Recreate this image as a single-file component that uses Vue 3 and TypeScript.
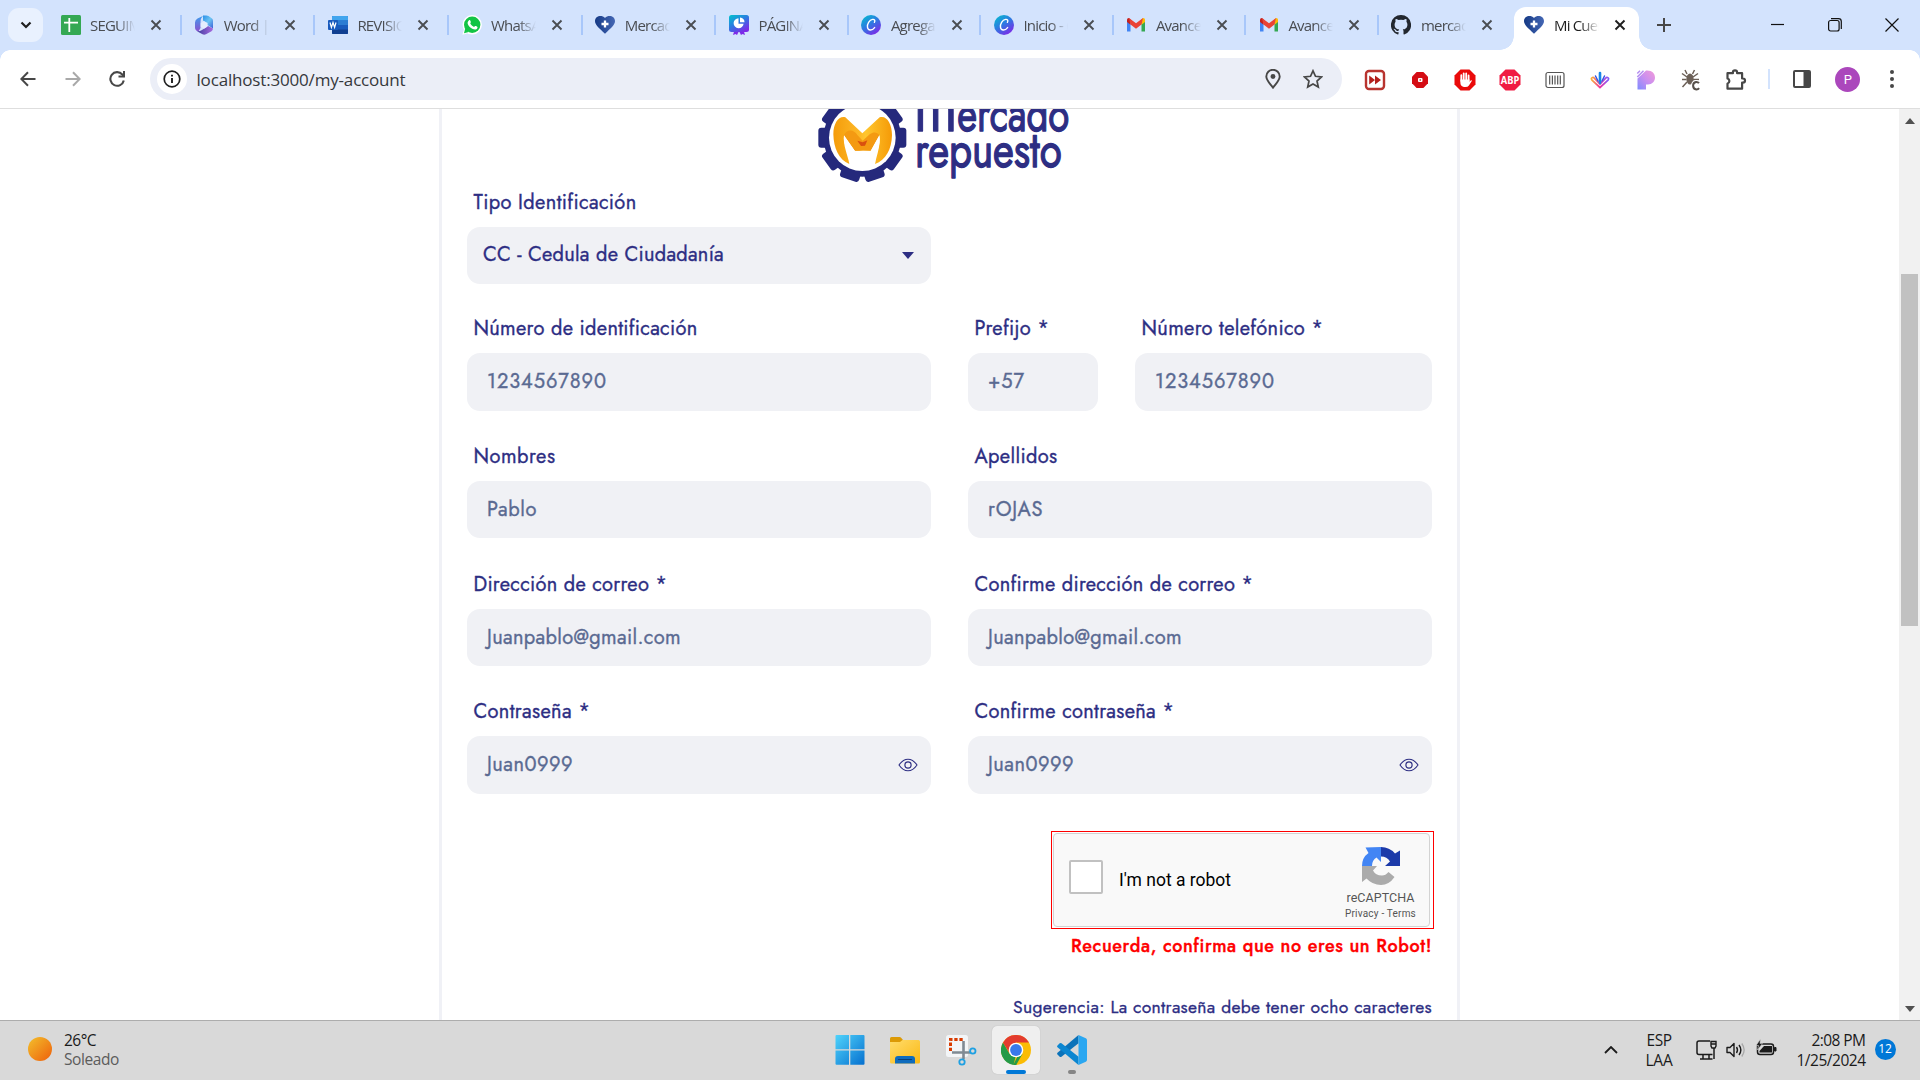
<script setup lang="ts">
interface Tab {
  icon: string
  title: string
  active?: boolean
}

interface Field {
  label: string
  value: string
  labelWidth: number
  valueWidth: number
  kind?: 'select' | 'password'
  slot: string
}

const tabs: Tab[] = [
  { icon: 'sheets', title: 'SEGUIMIENTO' },
  { icon: 'm365', title: 'Word | Microsoft' },
  { icon: 'word', title: 'REVISIONES' },
  { icon: 'whatsapp', title: 'WhatsApp' },
  { icon: 'heart', title: 'Mercado' },
  { icon: 'present', title: 'PÁGINAS' },
  { icon: 'canva', title: 'Agregar' },
  { icon: 'canva', title: 'Inicio - Canva' },
  { icon: 'gmail', title: 'Avances' },
  { icon: 'gmail', title: 'Avances' },
  { icon: 'github', title: 'mercado' },
  { icon: 'heart', title: 'Mi Cuenta', active: true },
]

const extensions = ['forward', 'stop', 'hand', 'abp', 'barcode', 'fan', 'pixel', 'bug', 'puzzle']

const fields: Field[] = [
  { label: 'Tipo Identificación', value: 'CC - Cedula de Ciudadanía', labelWidth: 163, valueWidth: 241, kind: 'select', slot: 'wide' },
  { label: 'Número de identificación', value: '1234567890', labelWidth: 224, valueWidth: 120, slot: 'left' },
  { label: 'Prefijo *', value: '+57', labelWidth: 75, valueWidth: 37, slot: 'prefix' },
  { label: 'Número telefónico *', value: '1234567890', labelWidth: 182, valueWidth: 120, slot: 'phone' },
  { label: 'Nombres', value: 'Pablo', labelWidth: 82, valueWidth: 50, slot: 'left' },
  { label: 'Apellidos', value: 'rOJAS', labelWidth: 83, valueWidth: 55, slot: 'right' },
  { label: 'Dirección de correo *', value: 'Juanpablo@gmail.com', labelWidth: 194, valueWidth: 194, slot: 'left' },
  { label: 'Confirme dirección de correo *', value: 'Juanpablo@gmail.com', labelWidth: 279, valueWidth: 194, slot: 'right' },
  { label: 'Contraseña *', value: 'Juan0999', labelWidth: 117, valueWidth: 86, kind: 'password', slot: 'left' },
  { label: 'Confirme contraseña *', value: 'Juan0999', labelWidth: 200, valueWidth: 86, kind: 'password', slot: 'right' },
]

const gearTeeth = Array.from({ length: 10 }, (_, i) => 18 + i * 36)

// Adjusts tracking so that a line of text spans the given width.
const vFit = {
  mounted(el: HTMLElement, binding: { value: number }) {
    const count = (el.textContent ?? '').length
    const natural = el.getBoundingClientRect().width
    if (count > 0) el.style.letterSpacing = `${(binding.value - natural) / count}px`
  },
}
</script>

<template>
  <div class="screen">
    <svg class="defs" aria-hidden="true">
      <defs>
        <linearGradient id="gCanva" x1="0" y1="0" x2="0.7" y2="1"><stop offset="0" stop-color="#00c4cc" /><stop offset=".5" stop-color="#2a7de1" /><stop offset="1" stop-color="#7d2ae8" /></linearGradient>
        <linearGradient id="gHeart" x1="0" y1="0" x2="1" y2="0"><stop offset="0" stop-color="#163a85" /><stop offset="1" stop-color="#4467b4" /></linearGradient>
        <linearGradient id="gM1" x1="0" y1="0" x2="1" y2="1"><stop offset="0" stop-color="#2c8fe8" /><stop offset=".5" stop-color="#6bc4f2" /><stop offset="1" stop-color="#3a5fd8" /></linearGradient>
        <linearGradient id="gM2" x1="0" y1="0" x2="1" y2="0"><stop offset="0" stop-color="#3e3d9e" /><stop offset="1" stop-color="#a96be0" /></linearGradient>
        <linearGradient id="gM3" x1="0" y1="0" x2="0" y2="1"><stop offset="0" stop-color="#3aa0ee" /><stop offset="1" stop-color="#8a50cf" /></linearGradient>
        <linearGradient id="gFan" x1="0" y1="0" x2="1" y2="0"><stop offset="0" stop-color="#f9b233" /><stop offset=".5" stop-color="#f030a0" /><stop offset="1" stop-color="#7a5cff" /></linearGradient>
        <linearGradient id="gPixel" x1="0" y1="1" x2="1" y2="0"><stop offset="0" stop-color="#7f8cff" /><stop offset=".5" stop-color="#c98ff0" /><stop offset="1" stop-color="#f39ad8" /></linearGradient>
        <linearGradient id="gSun" x1="0" y1="0" x2="1" y2="1"><stop offset="0" stop-color="#f3c02c" /><stop offset="1" stop-color="#ee5f0b" /></linearGradient>
        <linearGradient id="gWin" x1="0" y1="0" x2="1" y2="1"><stop offset="0" stop-color="#4fd3fb" /><stop offset="1" stop-color="#0670cf" /></linearGradient>
        <linearGradient id="gFolder" x1="0" y1="0" x2="1" y2="1"><stop offset="0" stop-color="#ffdc6b" /><stop offset="1" stop-color="#fbb914" /></linearGradient>
        <linearGradient id="gGold" x1="0" y1="0" x2="1" y2="0"><stop offset="0" stop-color="#f59c0a" /><stop offset=".45" stop-color="#fdb827" /><stop offset=".55" stop-color="#ffc62e" /><stop offset="1" stop-color="#f59a07" /></linearGradient>

        <symbol id="sheets" viewBox="0 0 20 20"><rect width="20" height="20" rx="1.5" fill="#34a853" /><path d="M8.3 3v14M3 7.7h14" stroke="#fff" stroke-width="1.8" /></symbol>
        <symbol id="m365" viewBox="0 0 20 20"><path d="M9 .5h3.500q1 0 2 .6L18 3.600q1 .8 1 2.400v7.500L13.500 10V8L9 5.500Z" fill="url(#gM1)" /><path d="M10 .5Q6.500 2 6.500 7v6L4.500 16.500q-3.500-1-3.500-4V7.500Q1 5 3.500 3.500Z" fill="url(#gM3)" /><path d="M3 16.200q2.500.3 5-1.200l6-4L19 13.500q0 1.800-1.500 2.700l-5.500 3q-1.800.9-3.500 0Z" fill="url(#gM2)" /><path d="m10 6.200 3.300 2v3.600L10 13.800l-3.300-2V8.200Z" fill="#e6eefd" /></symbol>
        <symbol id="word" viewBox="0 0 20 20"><rect x="4" y="1" width="16" height="18" rx="1" fill="#185abd" /><path d="M4 2q0-1 1-1h14q1 0 1 1v3.500H4Z" fill="#41a5ee" /><path d="M4 5.500h16V10H4Z" fill="#2b7cd3" /><path d="M4 14.500h16V18q0 1-1 1H5q-1 0-1-1Z" fill="#103f91" /><rect y="5" width="10" height="10" rx="1" fill="#185abd" /><path d="m2 7.500 1.400 5 1.600-5 1.600 5 1.400-5" fill="none" stroke="#fff" stroke-width="1.200" /></symbol>
        <symbol id="whatsapp" viewBox="0 0 20 20"><circle cx="10.200" cy="9.800" r="9.700" fill="#fff" /><path d="M.4 19.700 2 14l4.500 4Z" fill="#fff" /><circle cx="10.200" cy="9.800" r="8.200" fill="#12c445" /><path d="m2 18.200 1.200-4.700 3.500 3.500Z" fill="#12c445" /><path d="M6.800 5.500c.8-.8 1.300-.6 1.700.5.500 1.200.5 1.300-.3 2.200 1 1.900 2.100 2.900 3.900 3.700.9-1.100 1-1.200 1.800-.8 1.700.8 1.800.9 1.500 1.900-.6 1.500-2.500 2-4.600 1.100-2.600-1.100-4.500-3.400-5.100-5.300-.3-1.300.2-2.500 1.100-3.300Z" fill="#fff" /></symbol>
        <symbol id="heart" viewBox="0 0 20 20"><path d="M10 18.700C4 13 0 9.800 0 6 0 1.200 6.500-.8 10 3c3.500-3.800 10-1.800 10 3 0 3.800-4 7-10 12.700Z" fill="url(#gHeart)" /><path d="M10 5.500v7M6.500 9h7" stroke="#fff" stroke-width="2.300" /></symbol>
        <symbol id="present" viewBox="0 0 20 20"><path d="M5.500 15 4 20l2.500-1 1.500 1 2-4 2 4 1.500-1 2.500 1-1.500-5Z" fill="#7d2ae8" /><rect width="20" height="17" rx="2.500" fill="url(#gCanva)" /><path d="M9.500 3.200A5 5 0 1 0 14.600 8.700H9.500Z" fill="#fff" /><path d="M11 2.500A5 5 0 0 1 15.500 7.300H11Z" fill="#fff" /></symbol>
        <symbol id="canva" viewBox="0 0 20 20"><circle cx="10" cy="10" r="10" fill="url(#gCanva)" /><path d="M13.400 7.300c1-1.600.2-3.200-1.800-2.900C8.300 5 5.900 9 6.500 12.400c.5 3.200 4.300 3.800 7.100.2" fill="none" stroke="#fff" stroke-width="1.400" stroke-linecap="round" /></symbol>
        <symbol id="gmail" viewBox="0 0 20 20"><path d="M1 5v11.500h3.500V8Z" fill="#4285f4" /><path d="M19 5v11.500h-3.500V8Z" fill="#34a853" /><path d="M1 5.500v-1q0-1.500 1.800-1.500l1.700 1.200v5.500L1 7Z" fill="#c5221f" /><path d="M19 5.500v-1q0-1.500-1.800-1.500l-1.700 1.200v5.500L19 7Z" fill="#fbbc04" /><path d="m3 3 7 5.300L17 3l-1.500 6.500L10 13.700 4.500 9.500Z" fill="#ea4335" /></symbol>
        <symbol id="github" viewBox="0 0 20 20"><path d="M10 0a10 10 0 0 0-3.200 19.500c.5.100.7-.2.700-.5v-1.900c-2.800.6-3.400-1.200-3.400-1.200-.5-1.200-1.100-1.500-1.100-1.500-.9-.6.100-.6.100-.6 1 .1 1.500 1 1.500 1 .9 1.600 2.400 1.100 2.900.9.100-.7.400-1.100.7-1.300-2.300-.3-4.600-1.200-4.600-5 0-1.100.4-2 1-2.700-.1-.3-.4-1.300.1-2.700 0 0 .9-.3 2.800 1a9.500 9.500 0 0 1 5 0c1.900-1.300 2.800-1 2.800-1 .5 1.400.2 2.400.1 2.700.6.700 1 1.600 1 2.700 0 3.800-2.300 4.700-4.600 5 .4.300.7.900.7 1.800V19c0 .3.200.6.700.5A10 10 0 0 0 10 0Z" fill="#22272e" /></symbol>

        <symbol id="forward" viewBox="0 0 22 22"><rect x="2" y="2" width="18" height="18" rx="3" fill="#fff" stroke="#b8342f" stroke-width="2.400" /><path d="M5.200 6.500 11 11l-5.800 4.500ZM11 6.500l6 4.500-6 4.500Z" fill="#b3201c" /></symbol>
        <symbol id="stop" viewBox="0 0 22 22"><path d="M7.600 3h6.800l4.600 4.700v6.600L14.400 19H7.600L3 14.300V7.700Z" fill="#d40c14" /><rect x="9" y="9" width="4.500" height="4" rx="1" fill="#fff" /><circle cx="11.200" cy="11" r=".8" fill="#b00" /></symbol>
        <symbol id="hand" viewBox="0 0 22 22"><path d="M6.500.5h9l6 6v9l-6 6h-9l-6-6v-9Z" fill="#ea0a0a" /><path d="M7.300 12V6.200M9.700 10.500V4.300M12.200 10.500V4.500M14.600 11.500V6.500" stroke="#fff" stroke-width="1.800" stroke-linecap="round" /><path d="M6.400 10.500h9.100v2.200l1.500-1.500q1.200-.3.800.8l-2.900 4.500q-1 1.500-3.600 1.500c-3.500 0-4.900-1.600-4.900-4.500Z" fill="#fff" /></symbol>
        <symbol id="abp" viewBox="0 0 22 22"><path d="M6.500.5h9l6 6v9l-6 6h-9l-6-6v-9Z" fill="#f01b43" /><text x="1.800" y="14.800" textLength="18.500" lengthAdjust="spacingAndGlyphs" font-family="Open Sans, sans-serif" font-weight="700" font-size="10.500" fill="#fff">ABP</text></symbol>
        <symbol id="barcode" viewBox="0 0 22 22"><rect x="2" y="3.500" width="18" height="15" rx="2" fill="none" stroke="#555" stroke-width="1.200" /><path d="M5.700 6.500v9M8.400 6.500v9M11 6.500v9M13.700 6.500v9M16.300 6.500v9" stroke="#555" stroke-width="1.200" /></symbol>
        <symbol id="fan" viewBox="0 0 22 22"><path d="m11 18.500-8-7.300q-1.500-2 .5-2.700 1-.3 2 .8L11 15l5.500-5.700q1-1.100 2-.8 2 .7.500 2.700Z" fill="#fff" stroke="url(#gFan)" stroke-width="1.700" /><path d="M11 14V4" stroke="#1786e8" stroke-width="2.600" stroke-linecap="round" /><path d="m9 12-2.500-5M13 12l2.500-5" stroke="#3557e8" stroke-width="1.500" stroke-linecap="round" /></symbol>
        <symbol id="pixel" viewBox="0 0 22 22"><path d="M2.500 9.500 11 1.500c6-.5 9 3 9 7s-3 7-7 7h-2v5H2.500Z" fill="url(#gPixel)" /><path d="M2.300 4.500 5 1.800M2.300 8 8.500 1.800" stroke="#b48df0" stroke-width="1.500" /></symbol>
        <symbol id="bug" viewBox="0 0 22 22"><ellipse cx="10" cy="10" rx="3.600" ry="5.500" fill="#6c6057" /><path d="m7 5-2-4M12.500 5l2-4M7 8 2 4.500M13 8l5-3.500M6.500 10.500H2M13 10.500h6M7 13l-4.500 5" stroke="#6c6057" stroke-width="1.500" fill="none" /><path d="M19 14.200q-1.200-1.400-3-1.200-3 .6-2.900 3.900.2 3.200 3.200 3.500 1.800.1 2.800-1.300" fill="none" stroke="#fff" stroke-width="4" /><path d="M19 14.200q-1.200-1.400-3-1.200-3 .6-2.900 3.900.2 3.200 3.200 3.500 1.800.1 2.800-1.300" fill="none" stroke="#57504a" stroke-width="2" /></symbol>
        <symbol id="puzzle" viewBox="0 0 22 22"><path d="M2.500 4.200h5.400V3.500a2 2 0 0 1 4.200 0v.7h5v5.300h.8a2 2 0 0 1 0 4.200h-.8v6H2.500v-5.200a2.600 2.600 0 0 0 0-5Z" fill="none" stroke="#474747" stroke-width="2.200" stroke-linejoin="round" /></symbol>
      </defs>
    </svg>

    <header class="tabstrip">
      <button class="tab-search"><svg width="12" height="8" viewBox="0 0 12 8"><path d="m1.500 1.500 4.500 4.500 4.500-4.500" fill="none" stroke="#1f1f1f" stroke-width="2.200" /></svg></button>
      <div class="tabs">
        <div v-for="(tab, i) in tabs" :key="i" class="tab" :class="{ active: tab.active, before: i === 10, slim: i > 4 }">
          <svg class="favicon"><use :href="'#' + tab.icon" /></svg>
          <span class="tab-title">{{ tab.title }}</span>
          <svg class="tab-close" viewBox="0 0 12 12"><path d="m1.500 1.500 9 9m0-9-9 9" stroke="currentColor" stroke-width="1.900" /></svg>
        </div>
      </div>
      <svg class="plus" width="14" height="14" viewBox="0 0 14 14"><path d="M7 0v14M0 7h14" stroke="#474747" stroke-width="2" /></svg>
      <div class="window-buttons">
        <svg width="14" height="14" viewBox="0 0 14 14"><path d="M0 6.500h13" stroke="#111" stroke-width="1.200" /></svg>
        <svg width="14" height="14" viewBox="0 0 14 14"><rect x=".6" y="2.500" width="10.500" height="10.500" rx="2" fill="none" stroke="#111" stroke-width="1.200" /><path d="M3 .7h7.500q2.800 0 2.800 2.800V11" fill="none" stroke="#111" stroke-width="1.200" /></svg>
        <svg width="14" height="14" viewBox="0 0 14 14"><path d="m.5.500 13 13m0-13-13 13" stroke="#111" stroke-width="1.200" /></svg>
      </div>
    </header>

    <nav class="toolbar">
      <div class="nav-buttons">
        <svg width="16" height="16" viewBox="0 0 16 16"><path d="M15.500 8H1.500M8 1.200 1.300 8 8 14.800" fill="none" stroke="#474747" stroke-width="2" /></svg>
        <svg width="16" height="16" viewBox="0 0 16 16"><path d="M.5 8h14M8 1.200 14.700 8 8 14.800" fill="none" stroke="#a9a9a9" stroke-width="2" /></svg>
        <svg width="17" height="16" viewBox="0 0 17 16"><path d="M14.800 9.500A6.800 6.800 0 1 1 13.300 3.500L15.300 5.500" fill="none" stroke="#474747" stroke-width="2.100" /><path d="M16 0v6.500H9.500V4.600H14V0Z" fill="#474747" /></svg>
      </div>
      <div class="omnibox">
        <span class="site-info"><svg width="18" height="18" viewBox="0 0 18 18"><circle cx="9" cy="9" r="7.800" fill="none" stroke="#1f1f1f" stroke-width="1.700" /><path d="M9 8v5M9 4.700v1.800" stroke="#1f1f1f" stroke-width="1.900" /></svg></span>
        <span class="url"><span v-fit="209">localhost:3000/my-account</span></span>
        <svg class="pin" width="16" height="20" viewBox="0 0 16 20"><path d="M8 18.700C4 13.500 1.300 11 1.300 7.500a6.700 6.700 0 0 1 13.400 0C14.700 11 12 13.500 8 18.700Z" fill="none" stroke="#474747" stroke-width="1.900" /><circle cx="8" cy="7.500" r="2.400" fill="#474747" /></svg>
        <svg width="20" height="20" viewBox="0 0 20 20"><path d="m10 1.800 2.500 5.500 6 .7-4.500 4 1.300 6L10 15l-5.300 3L6 12 1.500 8l6-.7Z" fill="none" stroke="#474747" stroke-width="1.700" /></svg>
      </div>
      <div class="extensions">
        <svg v-for="name in extensions" :key="name" width="22" height="22"><use :href="'#' + name" /></svg>
      </div>
      <i class="divider"></i>
      <svg class="panel" width="18" height="18" viewBox="0 0 18 18"><rect x="1" y="1" width="16" height="16" rx="1" fill="none" stroke="#474747" stroke-width="2" /><path d="M10.500 1h6.500v16h-6.500Z" fill="#474747" /></svg>
      <span class="avatar">P</span>
      <svg class="kebab" width="4" height="18" viewBox="0 0 4 18"><circle cx="2" cy="2" r="2" /><circle cx="2" cy="9" r="2" /><circle cx="2" cy="16" r="2" /></svg>
    </nav>

    <main class="page">
      <section class="card">
        <svg class="brand" width="320" height="79" viewBox="0 27 960 237">
          <g transform="translate(247 113)" fill="#25297c">
            <circle r="117" />
            <rect v-for="a in gearTeeth" :key="a" x="-30" y="-132" width="60" height="50" rx="9" :transform="`rotate(${a})`" />
            <circle r="100" fill="#fff" />
          </g>
          <path d="M208 192C176 180 161 143 160 103 160 70 176 47 196 52L247 100 299 52C320 45 336 72 336 105 335 148 318 180 285 192 290 166 303 134 298 106L272 152H225L192 106C188 136 204 166 208 192Z" fill="url(#gGold)" />
          <path d="M192 106c7-20 30-18 40-1l16 17 22-20c10-7 22-7 28 4l-26 46h-47Z" fill="#f49a12" />
          <path d="m192 106 33 48 24-2 23 1 26-47c6 30-12 55-13 86h-75c1-32-22-57-18-86Z" fill="#fff" />
          <path d="m232 122 16 5 14-6-7 16-12 1Z" fill="#d9500f" />
          <g class="brand-name">
            <text x="402" y="94" font-size="220" textLength="130" lengthAdjust="spacingAndGlyphs">m</text>
            <text x="532" y="94" font-size="150" textLength="336" lengthAdjust="spacingAndGlyphs">ercado</text>
            <text x="405" y="202" font-size="150" textLength="440" lengthAdjust="spacingAndGlyphs">repuesto</text>
          </g>
        </svg>

        <form class="form">
          <div v-for="(f, i) in fields" :key="i" class="field" :class="f.slot">
            <label><span v-fit="f.labelWidth">{{ f.label }}</span></label>
            <div class="control" :class="f.kind">
              <span v-fit="f.valueWidth">{{ f.value }}</span>
              <svg v-if="f.kind === 'select'" width="12" height="7" viewBox="0 0 12 7"><path d="M0 0h12L6 7Z" fill="#2d2e83" /></svg>
              <svg v-if="f.kind === 'password'" width="20" height="14" viewBox="0 0 20 14"><path d="M1 7Q5 1.200 10 1.200T19 7q-4 5.800-9 5.800T1 7Z" fill="none" stroke="#2d2e83" stroke-width="1.100" /><circle cx="10" cy="7" r="3.100" fill="none" stroke="#2d2e83" stroke-width="1.200" /></svg>
            </div>
          </div>
        </form>

        <div class="captcha-frame">
          <div class="captcha">
            <span class="checkbox"></span>
            <span class="robot"><span v-fit="112">I'm not a robot</span></span>
            <div class="captcha-brand">
              <svg width="38" height="38" viewBox="0 0 38 38"><path d="M38 3.500V19H23l5-4.500Q25 9.500 19 9.500V0q8.500 0 14 6.500Z" fill="#1c3aa9" /><path d="M19 0v15l-4.500-4.500Q10 13 10 19H0Q0 10.500 6.500 6L3.500.500Z" fill="#4285f4" /><path d="M0 35V19h15l-4 4.500q2.500 5 9 5 3.500 0 6.500-3.500l6 5Q27 38 19 38 10.500 38 4.500 31.500Z" fill="#ababab" /></svg>
              <span class="captcha-name"><span v-fit="68">reCAPTCHA</span></span>
              <span class="captcha-links"><span v-fit="71">Privacy - Terms</span></span>
            </div>
          </div>
        </div>
        <p class="warning"><span v-fit="361">Recuerda, confirma que no eres un Robot!</span></p>
        <p class="hint"><span v-fit="419">Sugerencia: La contraseña debe tener ocho caracteres</span></p>
      </section>

      <aside class="scrollbar">
        <svg width="10" height="6" viewBox="0 0 10 6"><path d="M0 6 5 0l5 6Z" fill="#505050" /></svg>
        <div class="thumb"></div>
        <svg width="10" height="6" viewBox="0 0 10 6"><path d="m0 0 5 6 5-6Z" fill="#505050" /></svg>
      </aside>
    </main>

    <footer class="taskbar">
      <div class="weather">
        <svg width="24" height="24"><circle cx="12" cy="12" r="12" fill="url(#gSun)" /></svg>
        <div><div><span v-fit="32">26°C</span></div><div class="muted"><span v-fit="55">Soleado</span></div></div>
      </div>
      <div class="apps">
        <span class="app"><svg width="30" height="30" viewBox="0 0 30 30"><path d="M.5 1q0-1 1-1H14v14.200H.5ZM15.300 0H28.500q1 0 1 1v13.200H15.300ZM.5 15.500H14v14.200H1.500q-1 0-1-1ZM15.300 15.500H29.500v13.200q0 1-1 1H15.300Z" fill="url(#gWin)" /></svg></span>
        <span class="app"><svg width="30" height="30" viewBox="0 0 30 30"><path d="M0 3.500q0-1.500 1.500-1.500h8q1 0 1.600.8L13 5v5H0Z" fill="#dc9a06" /><path d="M0 7h10l2.500-2H28.500q1.500 0 1.500 1.500V27q0 1.500-1.500 1.500h-27Q0 28.500 0 27Z" fill="url(#gFolder)" /><path d="M5 28.500V24q0-3 3-3h14q3 0 3 3v4.500Z" fill="#0f6cbd" /><path d="M8.500 24.500h13" stroke="#0a3f77" stroke-width="1.200" stroke-linecap="round" /></svg></span>
        <span class="app"><svg width="32" height="32" viewBox="0 0 32 32"><rect x="1" y="1" width="22" height="22" rx="2.500" fill="#f3f5f7" /><path d="M5.500 17V5.500H18" fill="none" stroke="#d83b01" stroke-width="3" stroke-dasharray="3.300 1.800" /><path d="M18.500 7v18M7 18.500h18" stroke="#808a93" stroke-width="2.600" /><circle cx="27.800" cy="17" r="2.700" fill="none" stroke="#1fa0e2" stroke-width="1.800" /><circle cx="17" cy="28" r="2.700" fill="none" stroke="#1fa0e2" stroke-width="1.800" /></svg></span>
        <span class="app current"><svg width="30" height="30" viewBox="0 0 30 30"><circle cx="15" cy="15" r="15" fill="#fbbc05" /><path d="M2 7.500 8.500 18.800l6 3.200-2 8A15 15 0 0 1 2 7.500Z" fill="#249a48" /><path d="m21.500 18.700-6.300 11.300h-3l4-8Z" fill="#249a48" /><path d="M2 7.500a15 15 0 0 1 26 0H15L9 18.800Z" fill="#e33b2e" /><circle cx="15" cy="15" r="7.300" fill="#fff" /><circle cx="15" cy="15" r="5.900" fill="#3879ea" /></svg></span>
        <span class="app running"><svg width="30" height="30" viewBox="0 0 30 30"><path d="M21.500 0v8.200L4.500 21.700q-1 .6-1.800 0L.5 19.500q-.8-1 0-1.800Z" fill="#0b72b9" /><path d="M21.500 30v-8.200L4.500 8.300q-1-.6-1.800 0L.5 10.500q-.8 1 0 1.800Z" fill="#0b86d1" /><path d="M21.500 0 28.800 3.300q1.200.6 1.200 2v19.400q0 1.400-1.200 2L21.500 30Z" fill="#2aa7f1" /></svg></span>
      </div>
      <div class="tray">
        <svg class="up" width="14" height="8" viewBox="0 0 14 8"><path d="m1 7 6-6 6 6" fill="none" stroke="#1b1b1b" stroke-width="1.800" /></svg>
        <div class="lang"><div><span v-fit="25">ESP</span></div><div><span v-fit="27">LAA</span></div></div>
        <svg class="net" width="21" height="20" viewBox="0 0 21 20"><path d="M14 1H3Q1 1 1 3v9.500q0 2 2 2H16.500M7 14.500V19M13 14.500V19M4 19h12.500M18 8v11" fill="none" stroke="#1b1b1b" stroke-width="1.500" /><path d="M15 1.500h5V6L19 8h-3l-1-2ZM15 4h5" fill="none" stroke="#1b1b1b" stroke-width="1.400" /></svg>
        <svg class="vol" width="20" height="16" viewBox="0 0 20 16"><path d="M1 5.500h3L8 1.500v13L4 10.500H1Z" fill="none" stroke="#1b1b1b" stroke-width="1.400" stroke-linejoin="round" /><path d="M10.500 5q2 3 0 6M13 3q3.700 5 0 10" fill="none" stroke="#1b1b1b" stroke-width="1.400" /><path d="M15.800 1.500q4.700 6.500 0 13" fill="none" stroke="#a8a8a8" stroke-width="1.300" /></svg>
        <svg class="bat" width="21" height="17" viewBox="0 0 21 17"><rect x="1.500" y="5" width="16" height="10.500" rx="2.500" fill="none" stroke="#1b1b1b" stroke-width="1.500" /><path d="M8 7h8v6.500H3.500V12Z" fill="#1b1b1b" /><path d="M18.500 8.500h1.500v3.500h-1.500Z" fill="#1b1b1b" stroke="#1b1b1b" /><path d="M4.500 0 0 6.500h2.500L1.500 11 6.500 4.500H4Z" fill="#1b1b1b" stroke="#d9d9d9" stroke-width=".6" /></svg>
        <div class="clock"><div><span v-fit="54">2:08 PM</span></div><div><span v-fit="69">1/25/2024</span></div></div>
        <span class="badge">12</span>
      </div>
    </footer>
  </div>
</template>

<style>
body {
  margin: 0;
  overflow: hidden;
}
</style>

<style scoped>
.screen {
  width: 1920px;
  height: 1080px;
  display: flex;
  flex-direction: column;
  overflow: hidden;
  background: #fff;
  font-family: "Open Sans", "Noto Sans", sans-serif;
}
.screen * {
  box-sizing: border-box;
}
svg {
  display: block;
  flex: none;
}
span {
  white-space: nowrap;
}
.defs {
  width: 0;
  height: 0;
  position: absolute;
}

/* Tab strip */
.tabstrip {
  height: 50px;
  display: flex;
  align-items: center;
  background: #d3e3fd;
  flex: none;
}
.tab-search {
  width: 35px;
  height: 34px;
  margin-left: 8px;
  border: 0;
  padding: 0;
  border-radius: 11px;
  background: #e9f1fe;
  display: flex;
  align-items: center;
  justify-content: center;
}
.tabs {
  display: flex;
  margin-left: 4px;
  height: 50px;
  width: 1597px;
}
.tab {
  width: 133.700px;
  height: 50px;
  display: flex;
  align-items: center;
  padding-left: 13.500px;
  color: #4a4d52;
  position: relative;
  flex: none;
}
.tab.slim {
  width: 132.500px;
}
.tab:not(.active):not(.before)::after {
  content: "";
  width: 2px;
  height: 20px;
  background: #a8c7fa;
  position: absolute;
  right: -1px;
  top: 15px;
}
.favicon {
  width: 20px;
  height: 20px;
}
.tab-title {
  width: 45px;
  margin-left: 9.500px;
  font-size: 15px;
  letter-spacing: -0.8px;
  line-height: 22px;
  overflow: hidden;
  mask-image: linear-gradient(90deg, #000 60%, transparent);
}
.tab-close {
  width: 12px;
  height: 12px;
  margin-left: 15px;
}
.tab.active {
  width: 125px;
  margin-left: 4px;
  height: 43px;
  margin-top: 7px;
  padding: 0 0 7px 10px;
  border-radius: 12px 12px 0 0;
  background: #fff;
  color: #1f1f1f;
}
.tab.active::before,
.tab.active::after {
  content: "";
  position: absolute;
  bottom: 0;
  width: 14px;
  height: 14px;
}
.tab.active::before {
  left: -14px;
  background: radial-gradient(circle at 0 0, #d3e3fd 13.500px, #fff 14px);
}
.tab.active::after {
  right: -14px;
  background: radial-gradient(circle at 100% 0, #d3e3fd 13.500px, #fff 14px);
}
.plus {
  margin-left: 12.500px;
}
.window-buttons {
  display: flex;
  gap: 43px;
  margin-left: 100px;
}

/* Toolbar */
.toolbar {
  height: 59px;
  flex: none;
  display: flex;
  align-items: center;
  background: #fff;
  border-bottom: 1px solid #dedede;
  position: relative;
}
.toolbar::before,
.toolbar::after {
  content: "";
  position: absolute;
  top: 0;
  width: 10px;
  height: 10px;
}
.toolbar::before {
  left: 0;
  background: radial-gradient(circle at 100% 100%, #fff 9.500px, #d3e3fd 10px);
}
.toolbar::after {
  right: 0;
  background: radial-gradient(circle at 0 100%, #fff 9.500px, #d3e3fd 10px);
}
.nav-buttons {
  display: flex;
  gap: 28.500px;
  margin-left: 20px;
  width: 130px;
}
.omnibox {
  width: 1192px;
  height: 42px;
  border-radius: 21px;
  background: #ebeef7;
  display: flex;
  align-items: center;
  padding: 0 19.500px 0 6.500px;
  flex: none;
}
.site-info {
  width: 30px;
  height: 30px;
  border-radius: 50%;
  background: #fff;
  display: flex;
  align-items: center;
  justify-content: center;
}
.url {
  margin-left: 10px;
  font-size: 17px;
  color: #36383c;
}
.pin {
  margin-left: auto;
  margin-right: 22px;
}
.extensions {
  display: flex;
  gap: 23.100px;
  margin: 1px 0 0 22px;
}
.divider {
  width: 2px;
  height: 20px;
  background: #d3e3fd;
  margin-left: 21.500px;
}
.panel {
  margin-left: 23px;
}
.avatar {
  width: 25px;
  height: 25px;
  border-radius: 50%;
  background: #ab47bc;
  color: #fff;
  font-size: 13px;
  line-height: 25px;
  text-align: center;
  margin-left: 24px;
  font-family: Roboto, sans-serif;
}
.kebab {
  margin-left: 30px;
  fill: #474747;
}

/* Page */
.page {
  height: 911px;
  flex: none;
  display: flex;
  justify-content: space-between;
  overflow: hidden;
  background: #fff;
}
.card {
  width: 1021px;
  margin-left: 439px;
  border: solid #f0f1f6;
  border-width: 0 3px;
  font-family: Jost, Lato, sans-serif;
  color: #2d2e83;
}
.brand {
  margin-left: 338px;
}
.brand-name {
  font-family: Jost, Lato, sans-serif;
  font-weight: 400;
  fill: #2d2e83;
  stroke: #2d2e83;
  stroke-width: 4px;
  stroke-linejoin: round;
}
.form {
  display: grid;
  grid-template-columns: 464px 130px 297px;
  grid-template-rows: 126px 128px 128px 127px 97px;
  column-gap: 37px;
  margin-left: 25px;
}
.field {
  display: flex;
  flex-direction: column;
}
.left {
  grid-column: 1;
}
.wide,
.right {
  grid-column: 2 / 4;
}
.wide {
  grid-column: 1 / 4;
  width: 464px;
}
.field label {
  height: 27px;
  line-height: 30px;
  font-size: 20px;
  padding-left: 6.500px;
  margin-bottom: 12px;
  font-weight: 400;
  -webkit-text-stroke: 0.35px currentColor;
}
.control {
  height: 57.500px;
  border-radius: 13px;
  background: #f0f1f5;
  display: flex;
  align-items: center;
  justify-content: space-between;
  padding: 0 13px 0 20px;
  font-size: 20px;
  font-weight: 400;
  color: #5a6a92;
  -webkit-text-stroke: 0.35px currentColor;
}
.field:nth-child(1) .control,
.field:nth-child(5) .control,
.field:nth-child(6) .control,
.field:nth-child(7) .control,
.field:nth-child(8) .control {
  height: 57px;
}
.control.select {
  color: #2d2e83;
  padding: 0 17px 2px 16px;
}
.control.select svg {
  margin-top: 2px;
}
.captcha-frame {
  width: 383px;
  height: 98px;
  margin: 37px 0 0 609px;
  border: 1px solid #f00;
  padding: 1px 3px 1px 1px;
  background: #fff;
}
.captcha {
  height: 94px;
  border: 1px solid #d3d3d3;
  border-radius: 4px;
  background: #f9f9f9;
  display: flex;
  align-items: center;
  padding-left: 15px;
  font-family: Roboto, sans-serif;
}
.checkbox {
  width: 34px;
  height: 34px;
  border: 2px solid #c1c1c1;
  border-radius: 2px;
  background: #fff;
  margin-top: -6px;
}
.robot {
  font-size: 17.500px;
  color: #000;
  margin-left: 16px;
}
.captcha-brand {
  margin: 7px 13px 0 auto;
  display: flex;
  flex-direction: column;
  align-items: center;
  color: #555;
}
.captcha-name {
  font-size: 12.500px;
  line-height: 16px;
  margin-top: 5px;
}
.captcha-links {
  font-size: 10px;
  line-height: 15px;
}
.warning,
.hint {
  margin: 0;
  width: 384px;
  margin-left: 606px;
  display: flex;
  justify-content: flex-end;
}
.warning {
  color: #f00;
  font-size: 18px;
  font-weight: 500;
  line-height: 26px;
  margin-top: 4px;
  -webkit-text-stroke: 0.35px currentColor;
}
.hint {
  font-size: 17.500px;
  font-weight: 400;
  line-height: 24px;
  margin-top: 36px;
  -webkit-text-stroke: 0.3px currentColor;
}
.scrollbar {
  width: 21px;
  background: #f1f1f1;
  display: flex;
  flex-direction: column;
  align-items: center;
  padding: 9px 0 8px;
}
.thumb {
  width: 17px;
  height: 352px;
  margin: 150px 0 auto;
  background: #c1c1c1;
}

/* Taskbar */
.taskbar {
  height: 60px;
  flex: none;
  display: flex;
  background: #d9d9d9;
  border-top: 1px solid #adadad;
  font-size: 15.500px;
  line-height: 20px;
  color: #1b1b1b;
}
.weather {
  display: flex;
  width: 822px;
  padding-left: 28px;
  gap: 12px;
}
.weather svg {
  margin-top: 16px;
}
.weather > div,
.lang,
.clock {
  padding-top: 9px;
}
.weather .muted {
  line-height: 19px;
}
.muted {
  color: #5c5c5c;
}
.apps {
  width: 272px;
  display: flex;
  gap: 7.500px;
  padding-top: 5px;
  margin-left: 3.500px;
}
.app {
  width: 48px;
  height: 48px;
  border-radius: 5px;
  display: flex;
  align-items: center;
  justify-content: center;
  position: relative;
  flex: none;
}
.current {
  background: #efefef;
  box-shadow: 0 0 1px #aaa;
}
.current::after,
.running::after {
  content: "";
  position: absolute;
  bottom: 0;
  width: 20px;
  height: 4px;
  border-radius: 2px;
  background: #0078d7;
}
.running::after {
  width: 8px;
  background: #858585;
}
.tray {
  display: flex;
  align-items: flex-start;
  margin-left: auto;
  padding-right: 24.500px;
}
.up {
  margin: 25px 28px 0 0;
}
.lang {
  text-align: center;
  width: 27px;
}
.net {
  margin: 19px 0 0 23px;
}
.vol {
  margin: 21px 0 0 9px;
}
.bat {
  margin: 18px 0 0 10px;
}
.clock {
  width: 89px;
  text-align: right;
}
.badge {
  width: 21px;
  height: 21px;
  border-radius: 50%;
  background: #0078d7;
  color: #fff;
  font-size: 12px;
  line-height: 20px;
  text-align: center;
  margin: 18px 0 0 9px;
}
</style>
